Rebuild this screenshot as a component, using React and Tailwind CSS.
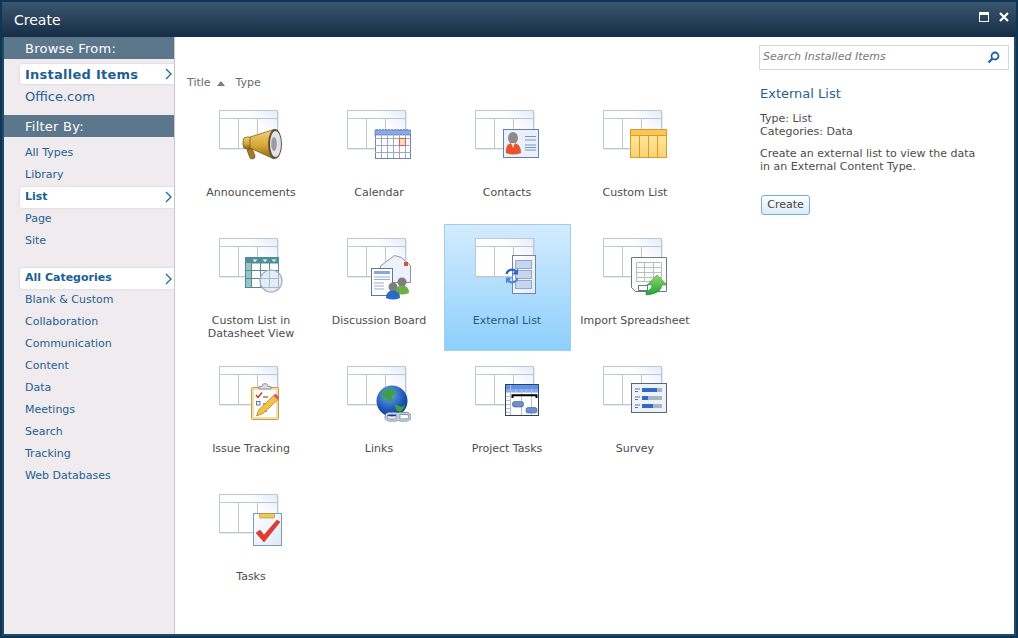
import React from "react";

const browse = [
  { label: "Installed Items", active: true },
  { label: "Office.com" },
];
const types = ["All Types", "Library", "List", "Page", "Site"];
const categories = ["Blank & Custom", "Collaboration", "Communication", "Content", "Data", "Meetings", "Search", "Tracking", "Web Databases"];

function Chevron() {
  return (
    <svg width="7" height="12" viewBox="0 0 7 12" className="absolute right-[2px] top-1/2 -translate-y-1/2">
      <path d="M1 1l5 5-5 5" fill="none" stroke="#1f6a9a" strokeWidth="1.3" />
    </svg>
  );
}

function Pill({ children, big }) {
  return (
    <div className={"relative ml-[16px] flex items-center rounded-l-[3px] bg-white pl-[5px] font-bold text-[#1c5f92] shadow-[0_0_2px_#c9c5cc] " + (big ? "h-[20px] pt-[2px] text-[13px] tracking-[0.25px]" : "h-[21px] text-[11px]")}>
      {children}
      <Chevron />
    </div>
  );
}

function NavLink({ children }) {
  return <div className="flex h-[22px] items-center pl-[21px] text-[11px] text-[#1f6190]">{children}</div>;
}

function NavHeader({ children }) {
  return <div className="flex h-[22px] items-center bg-[#5c768c] pl-[21px] pt-[1px] text-[13px] tracking-[0.25px] text-white">{children}</div>;
}

function BaseTable() {
  return (
    <g>
      <defs>
        <linearGradient id="cellFade" x1="0" y1="1" x2="1" y2="0">
          <stop offset="0.45" stopColor="#ffffff" />
          <stop offset="1" stopColor="#e6ecf9" />
        </linearGradient>
      </defs>
      <rect x="1" y="2" width="59" height="38" fill="#c8c8c8" opacity="0.4" />
      <rect x="0.5" y="0.5" width="58" height="38" fill="#fff" stroke="#bcc6d8" />
      <rect x="28" y="1" width="30" height="30" fill="url(#cellFade)" />
      <path d="M0 8.5h58M19.5 8.5v30M38.5 8.500v30" stroke="#bcc6d8" fill="none" />
    </g>
  );
}

function Megaphone() {
  return (
    <g>
      <defs>
        <linearGradient id="gold" x1="0" y1="0" x2="0" y2="1">
          <stop offset="0" stopColor="#f3d47a" />
          <stop offset="0.55" stopColor="#d5a535" />
          <stop offset="1" stopColor="#8a6518" />
        </linearGradient>
      </defs>
      <path d="M28 40l5-2 3 8q0 3-3 3l-2-1z" fill="#a47a26" stroke="#5f4714" strokeWidth="0.7" />
      <rect x="24" y="27" width="10" height="12" rx="4" fill="url(#gold)" stroke="#6b5118" strokeWidth="0.7" />
      <path d="M31 27L55 19.500V49L31 38z" fill="url(#gold)" stroke="#6b5118" strokeWidth="0.7" />
      <ellipse cx="56" cy="34" rx="7" ry="15" fill="#5f5130" />
      <ellipse cx="56.500" cy="34" rx="5.500" ry="13" fill="#e2e3e8" />
      <ellipse cx="55" cy="34" rx="2.800" ry="7" fill="#9b9ca3" />
    </g>
  );
}

function CalendarIcon() {
  const cols = [34.5, 40.5, 46.5, 52.5, 58.5];
  const rows = [28.5, 35.5, 42.5];
  return (
    <g>
      <rect x="28.500" y="23.500" width="35" height="25" fill="#fff" stroke="#6f86a6" />
      <rect x="28" y="20" width="36" height="5" fill="#8aa8e6" stroke="#4a6aa8" strokeWidth="0.6" />
      <path d="M30 20v-1M33 20v-1M36 20v-1M39 20v-1M42 20v-1M45 20v-1M48 20v-1M51 20v-1M54 20v-1M57 20v-1M60 20v-1" stroke="#4a6aa8" />
      {cols.map((x) => <path key={x} d={`M${x} 24v24`} stroke="#9bacc2" />)}
      {rows.map((y) => <path key={y} d={`M28 ${y}h36`} stroke="#9bacc2" />)}
      <rect x="52.500" y="28.500" width="6" height="7" fill="#fbdccc" stroke="#e0603c" />
    </g>
  );
}

function ContactCard() {
  return (
    <g>
      <rect x="28.500" y="19.500" width="35" height="28" fill="#eaf0fb" stroke="#6c7fa0" />
      <ellipse cx="38" cy="28" rx="5" ry="6" fill="#8c8c8c" />
      <path d="M31 43q-1-10 7-10t8 10q-8 3-15 0z" fill="#e8542a" />
      <path d="M36 33l2 5 2-5z" fill="#f6dcd0" />
      <path d="M50 26.500h11M50 30h11M50 35h11M50 37.500h11M50 40h11" stroke="#7c94bb" />
    </g>
  );
}

function YellowList() {
  return (
    <g>
      <defs>
        <linearGradient id="yellowCell" x1="0" y1="0" x2="0" y2="1">
          <stop offset="0" stopColor="#ffeaa8" />
          <stop offset="1" stopColor="#fbd274" />
        </linearGradient>
      </defs>
      <rect x="27.500" y="19.500" width="36" height="28" fill="url(#yellowCell)" stroke="#e09a1e" />
      <rect x="28" y="20" width="35" height="5" fill="#f8c65a" />
      <path d="M27 25.500h37M36.500 25v22M45.500 25v22M54.500 25v22" stroke="#e09a1e" />
    </g>
  );
}

function Datasheet() {
  return (
    <g>
      <rect x="26.500" y="19.500" width="33" height="30" fill="#fff" stroke="#4f8c93" />
      <rect x="27" y="20" width="32" height="5.500" fill="#4f9096" />
      <rect x="27" y="25" width="6" height="24" fill="#9cc4c8" />
      <path d="M32.500 20v29M41.500 25v24M50.500 25v24M27 32.500h32M27 40.500h32" stroke="#4f8c93" fill="none" />
      <path d="M33.500 21.500h5l-2.500 2.500zM43.500 21.500h5l-2.500 2.500zM52.500 21.500h5l-2.500 2.500z" fill="#e8f8f8" />
      <circle cx="52" cy="43" r="11" fill="#d5deef" fillOpacity="0.6" stroke="#a8aebc" strokeWidth="1.200" />
    </g>
  );
}

function Person({ x, y, color }) {
  return (
    <g>
      <circle cx={x} cy={y} r="4.500" fill="#7e7e7e" />
      <path d={`M${x - 7} ${y + 11}q0-7.500 7-7.500t7 7.500q-7 3-14 0z`} fill={color} />
    </g>
  );
}

function Discussion() {
  return (
    <g>
      <path d="M33.500 28l14-10.500 7 2 9 8v17h-30z" fill="#edf1f9" stroke="#8a93a6" />
      <rect x="57" y="24" width="4" height="4" fill="#d8523a" />
      <rect x="24.500" y="30.500" width="21" height="27" fill="#fff" stroke="#667890" />
      <rect x="27" y="33" width="16" height="3" fill="#8aa8de" />
      <path d="M27 39h16M27 41.500h16M27 45h10M27 48h10M27 51h10" stroke="#96add4" />
      <Person x={55} y={44} color="#6fae44" />
      <Person x={46} y={49} color="#2c6cc0" />
    </g>
  );
}

function ExternalDoc() {
  return (
    <g>
      <defs>
        <linearGradient id="docFade" x1="0" y1="0" x2="1" y2="1">
          <stop offset="0" stopColor="#ffffff" />
          <stop offset="1" stopColor="#e4ebf7" />
        </linearGradient>
      </defs>
      <rect x="37.500" y="17.500" width="23" height="38" fill="url(#docFade)" stroke="#7385a3" />
      <rect x="40.500" y="22.500" width="16" height="8" fill="#c7d6ee" stroke="#93a8c8" />
      <rect x="40.500" y="32.500" width="16" height="8" fill="#c7d6ee" stroke="#93a8c8" />
      <rect x="40.500" y="42.500" width="16" height="8" fill="#c7d6ee" stroke="#93a8c8" />
      <path d="M31.500 36a5.500 5.500 0 0 1 9.500-2.500" fill="none" stroke="#2f62c8" strokeWidth="2.200" />
      <path d="M43 30.500v6h-6z" fill="#2f62c8" />
      <path d="M42.500 40a5.500 5.500 0 0 1-9.500 2.500" fill="none" stroke="#4d85e0" strokeWidth="2.200" />
      <path d="M31 45.500v-6h6z" fill="#4d85e0" />
    </g>
  );
}

function ImportSheet() {
  return (
    <g>
      <defs>
        <linearGradient id="greenArrow" x1="0" y1="0" x2="0" y2="1">
          <stop offset="0" stopColor="#8fd86a" />
          <stop offset="1" stopColor="#25a03c" />
        </linearGradient>
      </defs>
      <path d="M28.500 19.500h35v34h-31l-4-4z" fill="#fdfdfd" stroke="#6e7a88" />
      <path d="M33.500 24.500h25v19h-25zM33.500 29.500h25M33.500 34.500h25M33.500 39.500h25M41.500 24.500v19M50.500 24.500v19" fill="none" stroke="#b7bfb8" />
      <rect x="35.500" y="47.500" width="9" height="5" fill="#fff" stroke="#6e7a88" />
      <path d="M54 37L64 47H59Q58 56 43 57V53Q49 52 49 47H44z" fill="url(#greenArrow)" stroke="#1f8a35" strokeWidth="0.5" />
    </g>
  );
}

function Clipboard() {
  return (
    <g>
      <rect x="32.500" y="21.500" width="27" height="32" rx="1" fill="#f3dfa9" stroke="#c49a4c" />
      <rect x="35" y="24" width="22" height="27" fill="#fff" />
      <path d="M40 23v-2.500h3a3 3 0 0 1 6 0h3V23z" fill="#d8dde4" stroke="#717a86" strokeWidth="0.7" />
      <path d="M37 29l2 2.500 4-5" fill="none" stroke="#d42e22" strokeWidth="1.400" />
      <path d="M44 31h5M44 38h3M44 45h4" stroke="#444" />
      <rect x="37.500" y="35.500" width="3.500" height="3.500" fill="none" stroke="#5578b8" />
      <path d="M37.500 50l2-6 15-14.500 4.500 4-15 14z" fill="#f3c23e" stroke="#8a6d1c" strokeWidth="0.6" />
      <path d="M54.500 29.500l2-2 3.500 3.500-1 3z" fill="#d8586a" />
    </g>
  );
}

function Globe() {
  return (
    <g>
      <defs>
        <radialGradient id="globeBlue" cx="0.4" cy="0.3" r="0.8">
          <stop offset="0" stopColor="#6fa8e8" />
          <stop offset="0.6" stopColor="#1f58b8" />
          <stop offset="1" stopColor="#0e2f78" />
        </radialGradient>
      </defs>
      <circle cx="45" cy="35" r="15.500" fill="url(#globeBlue)" />
      <path d="M37 25q6-4 10-2l2 4-4 3 1 4-5 2-3-4-4-1q0-4 3-6zM47 38l8 3 3-3q-1 6-5 8l-3-1z" fill="#3da048" />
      <rect x="39" y="47.500" width="13" height="6.500" rx="3.200" fill="none" stroke="#6f7e96" strokeWidth="3" />
      <rect x="50" y="47.500" width="13" height="6.500" rx="3.200" fill="none" stroke="#6f7e96" strokeWidth="3" />
      <rect x="39" y="47.500" width="13" height="6.500" rx="3.200" fill="none" stroke="#c7d2e4" strokeWidth="1.500" />
      <rect x="50" y="47.500" width="13" height="6.500" rx="3.200" fill="none" stroke="#c7d2e4" strokeWidth="1.500" />
    </g>
  );
}

function Gantt() {
  return (
    <g>
      <rect x="30.500" y="18.500" width="33" height="31" fill="#fff" stroke="#30415e" />
      <rect x="31" y="19" width="32" height="4" fill="#5f92ee" />
      <rect x="31" y="23" width="32" height="3.500" fill="#86abee" />
      <path d="M35.500 19v30M40.500 23v3.500M46.500 23v26M51.500 23v3.500M56.500 23v26M31 30.500h4.500M31 34.500h4.500M31 38.500h4.500M31 42.500h4.500M31 46.500h4.500" stroke="#b6c2d2" fill="none" />
      <path d="M37.500 32v-2.700h24V32" fill="none" stroke="#000" strokeWidth="2" />
      <rect x="37.500" y="35.500" width="11" height="5.500" rx="2" fill="#6d8fcb" stroke="#385a96" strokeWidth="0.6" />
      <rect x="51" y="41.500" width="11" height="5.500" rx="2" fill="#6d8fcb" stroke="#385a96" strokeWidth="0.6" />
    </g>
  );
}

function SurveyIcon() {
  return (
    <g>
      <rect x="28.500" y="17.500" width="35" height="29" fill="#eef1f9" stroke="#59637a" />
      <path d="M32 23h5M32 25.500h3M32 31h5M32 33.500h3M32 39h5M32 41.500h3" stroke="#6d7688" />
      <rect x="39" y="22" width="20" height="4" fill="#a9b5c6" />
      <rect x="39" y="22" width="15" height="4" fill="#2f6cc4" />
      <rect x="39" y="30" width="20" height="4" fill="#a9b5c6" />
      <rect x="39" y="30" width="6" height="4" fill="#2f6cc4" />
      <rect x="39" y="38" width="20" height="4" fill="#a9b5c6" />
      <rect x="39" y="38" width="11" height="4" fill="#2f6cc4" />
    </g>
  );
}

function TaskCheck() {
  return (
    <g>
      <defs>
        <linearGradient id="taskFade" x1="0" y1="0" x2="1" y2="1">
          <stop offset="0" stopColor="#ffffff" />
          <stop offset="1" stopColor="#dfe8f8" />
        </linearGradient>
      </defs>
      <rect x="34.500" y="19.500" width="28" height="32" fill="url(#taskFade)" stroke="#7a9ab8" />
      <rect x="40.500" y="19.500" width="15" height="4.500" rx="1" fill="#efc958" stroke="#b08a2a" strokeWidth="0.6" />
      <path d="M37 39l4-3 4 5 13-15 3 2-16 20z" fill="#e23a2c" stroke="#b8281e" strokeWidth="0.5" />
    </g>
  );
}

const tiles = [
  { label: "Announcements", Icon: Megaphone },
  { label: "Calendar", Icon: CalendarIcon },
  { label: "Contacts", Icon: ContactCard },
  { label: "Custom List", Icon: YellowList },
  { label: "Custom List in Datasheet View", Icon: Datasheet },
  { label: "Discussion Board", Icon: Discussion },
  { label: "External List", Icon: ExternalDoc, selected: true },
  { label: "Import Spreadsheet", Icon: ImportSheet },
  { label: "Issue Tracking", Icon: Clipboard },
  { label: "Links", Icon: Globe },
  { label: "Project Tasks", Icon: Gantt },
  { label: "Survey", Icon: SurveyIcon },
  { label: "Tasks", Icon: TaskCheck },
];

function Tile({ label, Icon, selected }) {
  return (
    <div className="relative flex h-[128px] w-[128px] flex-col items-center pt-[14px]">
      {selected && (
        <div className="absolute left-[1px] top-0 h-[127px] w-[127px] border border-[#9fd0ec] bg-gradient-to-b from-[#d3ebfd] to-[#8ccffc]"></div>
      )}
      <svg width="64" height="64" viewBox="0 0 64 64" className="relative shrink-0">
        <BaseTable />
        <Icon />
      </svg>
      <div className={"relative mt-[12px] px-[2px] text-center text-[11px] leading-[13px] " + (selected ? "text-[#245a85]" : "text-[#4c4c4c]")}>{label}</div>
    </div>
  );
}

export default function App() {
  return (
    <div className="box-border flex h-[638px] w-[1018px] flex-col overflow-hidden border-[2px] border-[#0e3554] bg-[#1f4a69] p-[2px] pt-0 font-['DejaVu_Sans',Verdana,sans-serif]">
      {/* title bar */}
      <div className="-mx-[2px] flex h-[35px] shrink-0 items-center justify-between bg-gradient-to-b from-[#3c566f] to-[#172d46] pl-[12px] pr-[7px]">
        <span className="pt-[2px] text-[14px] text-white">Create</span>
        <div className="mb-[6px] flex items-center gap-[10px]">
          <svg width="10" height="10" viewBox="0 0 10 10">
            <rect x="0.500" y="0.500" width="9" height="9" fill="none" stroke="#fff" />
            <rect x="0" y="0" width="10" height="3" fill="#fff" />
          </svg>
          <svg width="10" height="10" viewBox="0 0 10 10">
            <path d="M1 1l8 8M9 1l-8 8" stroke="#fff" strokeWidth="2.200" />
          </svg>
        </div>
      </div>

      <div className="flex min-h-0 flex-1 bg-white">
        {/* left nav */}
        <div className="w-[171px] shrink-0 border-r border-[#c9c5cc] bg-[#efebef]">
          <NavHeader>Browse From:</NavHeader>
          <div className="mt-[5px] h-[51px] text-[13px] text-[#1f6190]">
            <Pill big>{browse[0].label}</Pill>
            <div className="flex h-[24px] items-center pl-[21px] pt-[2px]">{browse[1].label}</div>
          </div>
          <NavHeader>Filter By:</NavHeader>
          <div className="mt-[5px]">
            {types.map((t) =>
              t === "List" ? (
                <div key={t} className="flex h-[22px] items-center"><div className="w-full"><Pill>{t}</Pill></div></div>
              ) : (
                <NavLink key={t}>{t}</NavLink>
              )
            )}
          </div>
          <div className="mt-[16px]">
            <Pill>All Categories</Pill>
          </div>
          <div>
            {categories.map((c) => <NavLink key={c}>{c}</NavLink>)}
          </div>
        </div>

        {/* tiles */}
        <div className="w-[584px] shrink-0 pl-[12px]">
          <div className="mt-[39px] flex h-[14px] items-center text-[11px] text-[#6b6b6b]">
            <span>Title</span>
            <span className="ml-[6px] h-0 w-0 border-x-[4px] border-b-[5px] border-x-transparent border-b-[#7b7b7b]"></span>
            <span className="ml-[11px]">Type</span>
          </div>
          <div className="mt-[6px] grid grid-cols-[repeat(4,128px)]">
            {tiles.map((t) => <Tile key={t.label} {...t} />)}
          </div>
        </div>

        {/* details */}
        <div className="min-w-0 flex-1 pr-[5px]">
          <div className="mt-[8px] flex h-[25px] items-center justify-between border border-[#d8d8d8] pl-[3px] pr-[8px] text-[11px] italic text-[#777]">
            <span>Search Installed Items</span>
            <svg width="13" height="13" viewBox="0 0 13 13">
              <circle cx="8" cy="5" r="3.500" fill="none" stroke="#1f62a8" strokeWidth="1.800" />
              <path d="M5.500 7.500L1.500 11.500" stroke="#1f62a8" strokeWidth="2.400" />
            </svg>
          </div>
          <div className="mt-[16px] pl-[1px] text-[13px] leading-[16px] text-[#1f6190]">External List</div>
          <div className="mt-[10px] pl-[1px] text-[11px] leading-[13px] text-[#4c4c4c]">
            <div>Type: List</div>
            <div>Categories: Data</div>
            <div className="mt-[9px]">Create an external list to view the data<br />in an External Content Type.</div>
          </div>
          <button className="ml-[2px] mt-[22px] flex h-[20px] w-[49px] items-center justify-center rounded-[3px] border border-[#6fb0d0] bg-gradient-to-b from-white to-[#dcebf6] text-[11px] text-[#444]">Create</button>
        </div>
      </div>
    </div>
  );
}
